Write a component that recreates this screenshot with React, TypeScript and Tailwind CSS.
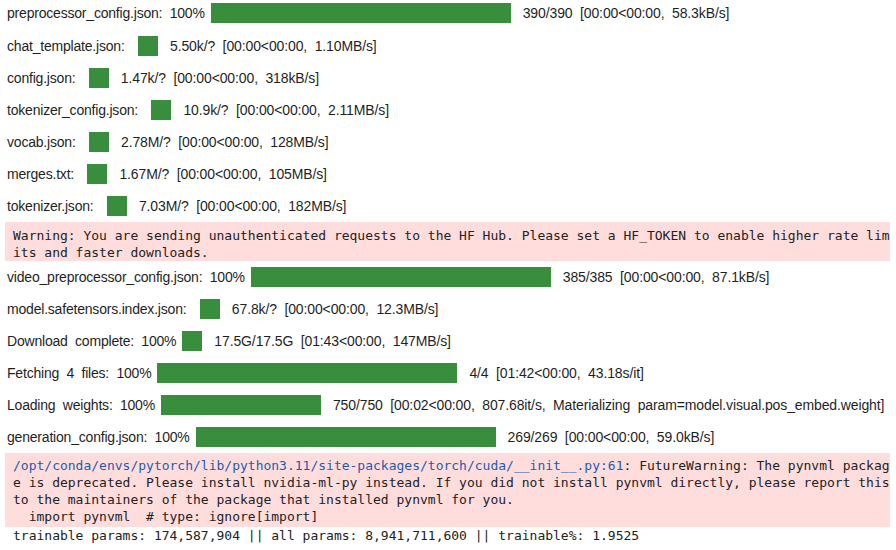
import React from 'react';

type Row = { label: string; bar: number; status: string };

const topRows: Row[] = [
  { label: 'chat_template.json:  ', bar: 20, status: '5.50k/?  [00:00<00:00,  1.10MB/s]' },
  { label: 'config.json:  ', bar: 20, status: '1.47k/?  [00:00<00:00,  318kB/s]' },
  { label: 'tokenizer_config.json:  ', bar: 20, status: '10.9k/?  [00:00<00:00,  2.11MB/s]' },
  { label: 'vocab.json:  ', bar: 20, status: '2.78M/?  [00:00<00:00,  128MB/s]' },
  { label: 'merges.txt:  ', bar: 20, status: '1.67M/?  [00:00<00:00,  105MB/s]' },
  { label: 'tokenizer.json:  ', bar: 20, status: '7.03M/?  [00:00<00:00,  182MB/s]' },
];

const midRows: Row[] = [
  { label: 'video_preprocessor_config.json:  100%', bar: 300, status: '385/385  [00:00<00:00,  87.1kB/s]' },
  { label: 'model.safetensors.index.json:  ', bar: 20, status: '67.8k/?  [00:00<00:00,  12.3MB/s]' },
  { label: 'Download  complete:  100%', bar: 20, status: '17.5G/17.5G  [01:43<00:00,  147MB/s]' },
  { label: 'Fetching  4  files:  100%', bar: 300, status: '4/4  [01:42<00:00,  43.18s/it]' },
  {
    label: 'Loading  weights:  100%',
    bar: 160,
    status: '750/750  [00:02<00:00,  807.68it/s,  Materializing  param=model.visual.pos_embed.weight]',
  },
  { label: 'generation_config.json:  100%', bar: 300, status: '269/269  [00:00<00:00,  59.0kB/s]' },
];

const ProgressRow = ({ row, className = '' }: { row: Row; className?: string }) => (
  <div className={`flex items-center h-[32px] pl-[7px] text-[14px] text-[#1f1f1f] whitespace-pre ${className}`}>
    <span className="tracking-[-0.2px]">{row.label}</span>
    <div className="h-[20px] bg-[#388e3c] ml-[6px] shrink-0" style={{ width: row.bar }} />
    <span className="ml-[12px] tracking-[-0.12px]">{row.status}</span>
  </div>
);

export default function App() {
  return (
    <div
      className="w-[896px] h-[550px] overflow-hidden bg-white"
      style={{ fontFamily: '"Liberation Sans", Arial, sans-serif' }}
    >
      <ProgressRow
        className="-mt-[3px] mb-[1px]"
        row={{ label: 'preprocessor_config.json:  100%', bar: 300, status: '390/390  [00:00<00:00,  58.3kB/s]' }}
      />
      {topRows.map((r) => (
        <ProgressRow key={r.label} row={r} />
      ))}

      <div className="ml-[5px] w-[885px] bg-[#ffdddd] pl-[8px] pt-[5px] pb-[0px] font-['DejaVu_Sans_Mono',monospace] text-[13px] leading-[17px] text-[#222] whitespace-pre">
        <div>Warning: You are sending unauthenticated requests to the HF Hub. Please set a HF_TOKEN to enable higher rate lim</div>
        <div>its and faster downloads.</div>
      </div>

      {midRows.map((r) => (
        <ProgressRow key={r.label} row={r} />
      ))}

      <div className="ml-[5px] w-[885px] bg-[#ffdddd] pl-[8px] pt-[4px] pb-[2px] font-['DejaVu_Sans_Mono',monospace] text-[13px] leading-[17px] text-[#222] whitespace-pre">
        <div>
          <span className="text-[#1d5bb0]">/opt/conda/envs/pytorch/lib/python3.11/site-packages/torch/cuda/__init__.py:61</span>
          : FutureWarning: The pynvml packag
        </div>
        <div>e is deprecated. Please install nvidia-ml-py instead. If you did not install pynvml directly, please report this</div>
        <div>to the maintainers of the package that installed pynvml for you.</div>
        <div>  import pynvml  # type: ignore[import]</div>
      </div>
      <div className="pl-[13px] font-['DejaVu_Sans_Mono',monospace] text-[13px] leading-[17px] text-[#222] whitespace-pre">
        trainable params: 174,587,904 || all params: 8,941,711,600 || trainable%: 1.9525
      </div>
    </div>
  );
}
